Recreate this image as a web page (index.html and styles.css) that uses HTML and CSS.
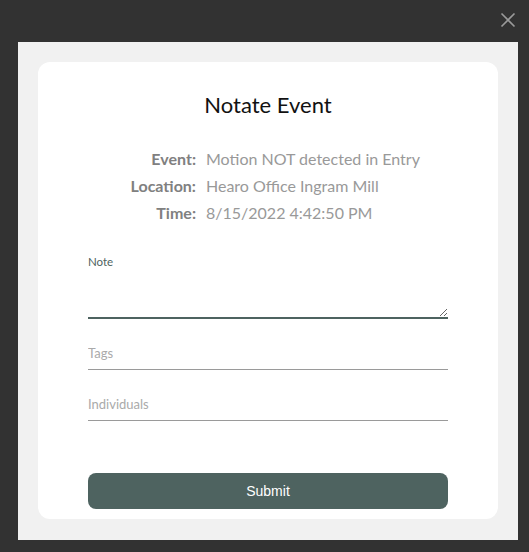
FILE: index.html
```html
<!DOCTYPE html>
<html lang="en">
<head>
<meta charset="utf-8">
<title>Notate Event</title>
<link rel="stylesheet" href="styles.css">
</head>
<body>
<button class="close" aria-label="Close">
  <svg width="16" height="16" viewBox="0 0 16 16"><path d="M1.5 1.5 L14.5 14.5 M14.5 1.5 L1.5 14.5" stroke="#9a9a9a" stroke-width="1.6" fill="none"/></svg>
</button>
<div class="panel">
  <div class="card">
    <h1 class="title">Notate Event</h1>
    <dl class="info">
      <dt>Event:</dt><dd>Motion NOT detected in Entry</dd>
      <dt>Location:</dt><dd>Hearo Office Ingram Mill</dd>
      <dt>Time:</dt><dd>8/15/2022 4:42:50 PM</dd>
    </dl>
    <form class="form">
      <label class="note-label" for="note">Note</label>
      <textarea id="note" class="note"></textarea>
      <input class="field" type="text" placeholder="Tags">
      <input class="field" type="text" placeholder="Individuals">
      <button type="button" class="submit">Submit</button>
    </form>
  </div>
</div>
</body>
</html>
```
FILE: styles.css
```css
html, body {
  margin: 0;
  padding: 0;
}
body {
  background: #323232;
  font-family: Lato, "Open Sans", sans-serif;
  height: 552px;
  overflow: hidden;
}
.close {
  position: absolute;
  top: 12px;
  left: 500px;
  width: 16px;
  height: 16px;
  padding: 0;
  border: 0;
  background: none;
  line-height: 0;
}
.panel {
  margin: 42px 0 0 18px;
  width: 500px;
  box-sizing: border-box;
  padding: 20px 20px 21px;
  background: #f1f1f1;
}
.card {
  background: #fff;
  border-radius: 12px;
  padding: 29px 50px 10px;
}
.title {
  margin: 0;
  text-align: center;
  font-size: 22px;
  font-weight: 400;
  color: #111;
  line-height: 28px;
}
.info {
  display: grid;
  grid-template-columns: 108px 1fr;
  column-gap: 10px;
  margin: 26px 0 0;
  font-size: 16px;
  line-height: 27px;
}
.info dt {
  text-align: right;
  font-weight: 700;
  color: #808080;
}
.info dd {
  margin: 0;
  color: #999;
}
.form {
  display: flex;
  flex-direction: column;
  margin-top: 28px;
}
.note-label {
  font-size: 11.5px;
  color: #4e6360;
  line-height: 16px;
}
.note {
  display: block;
  box-sizing: border-box;
  width: 360px;
  height: 49px;
  margin: 0;
  border: 0;
  border-bottom: 2px solid #4e6360;
  padding: 4px 0;
  resize: vertical;
  font-family: inherit;
  outline: none;
}
.field {
  box-sizing: border-box;
  width: 360px;
  height: 32px;
  margin-top: 19px;
  padding: 0 0 2px;
  border: 0;
  border-bottom: 1px solid #9a9a9a;
  font-family: inherit;
  font-size: 13px;
  color: #666;
  outline: none;
}
.field::placeholder {
  color: #aaa;
}
.submit {
  margin-top: 52px;
  height: 36px;
  width: 360px;
  border: 0;
  border-radius: 8px;
  background: #4e6360;
  color: #fff;
  font-family: "Liberation Sans", Arial, sans-serif;
  font-size: 14px;
}
```
